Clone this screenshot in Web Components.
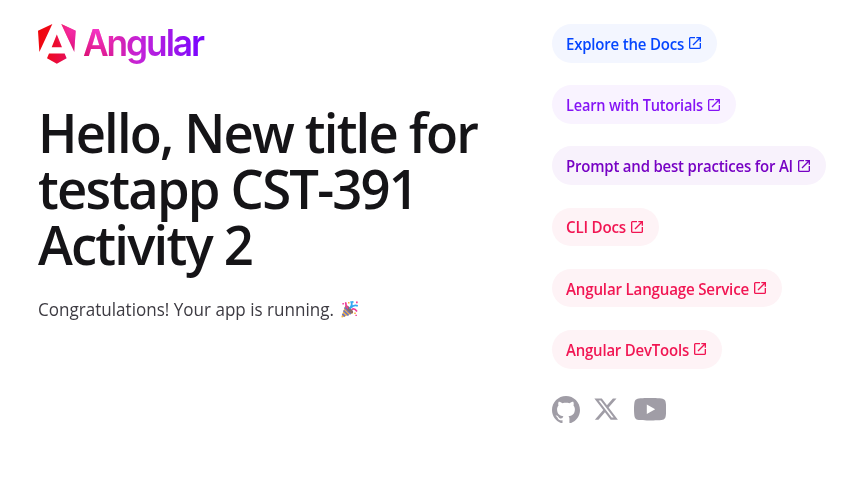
<!DOCTYPE html>
<html lang="en">
<head>
<meta charset="utf-8">
<title>Angular app</title>
<style>
body{margin:0;background:#fff;overflow:hidden;font-family:"Open Sans","Noto Sans",sans-serif;color:#151417}
</style>
</head>
<body>
<app-root></app-root>
<script>
/* Sets a single line of text to an exact advance width. */
class FitText extends HTMLElement{
  connectedCallback(){
    const r=this.attachShadow({mode:'open'});
    const w=parseFloat(this.getAttribute('width'));
    r.innerHTML=`<style>:host{display:block;width:${w}px;white-space:nowrap}span{display:inline-block;transform-origin:0 50%}</style><span><slot></slot></span>`;
    const s=r.querySelector('span');
    s.style.transform=`scaleX(${w/s.getBoundingClientRect().width})`;
  }
}
class AngularLogo extends HTMLElement{
  constructor(){super();this.attachShadow({mode:'open'}).innerHTML=`
<style>:host{display:flex;height:41px}svg{display:block;flex:none}
.word{margin-left:7.3px;height:42px;width:122px;font:600 37px/38px Inter,sans-serif;letter-spacing:-2.2px;transform:scaleX(.955);transform-origin:0 50%;padding-right:6px;color:transparent;background:radial-gradient(circle at 15px 3px,#ff41e0cc,#ff41f800 32px),linear-gradient(90deg,#dc1070,#dc1c96 20%,#c524d8 45%,#9c16ec 75%,#7b04ff 95%);-webkit-background-clip:text;background-clip:text}</style>
<svg width="38" height="41" viewBox="0 0 38 41">
<defs>
<linearGradient id="m" x1="0" y1="60" x2="222" y2="110" gradientUnits="userSpaceOnUse"><stop stop-color="#f0060b"/><stop offset=".35" stop-color="#ee0a1c"/><stop offset=".75" stop-color="#e90d4a"/><stop offset="1" stop-color="#dc1180"/></linearGradient>
<radialGradient id="p" cx="195" cy="32" r="115" gradientUnits="userSpaceOnUse"><stop stop-color="#f832b8" stop-opacity=".8"/><stop offset="1" stop-color="#ff41f8" stop-opacity="0"/></radialGradient>
<path id="s" d="M222.077 39.192l-8.019 125.923L137.387 0l84.69 39.192zm-53.105 162.825l-57.933 33.056-57.934-33.056 11.783-28.556h92.301l11.783 28.556zM111.039 62.675l30.357 73.803H80.681l30.358-73.803zM7.937 165.115L0 39.192 84.69 0 7.937 165.115z"/>
</defs>
<g transform="scale(.1695)"><use href="#s" fill="url(#m)"/><use href="#s" fill="url(#p)"/></g>
</svg><div class="word">Angular</div>`}
}
class PartyPopper extends HTMLElement{
  constructor(){super();this.attachShadow({mode:'open'}).innerHTML=`
<style>:host{display:block;width:18px;height:18px}svg{display:block}</style>
<svg width="18" height="18" viewBox="0 0 18 18" fill="none">
<path d="M4.4 5.2C7 6 11 10 12 13.2L1.2 17.4Q.2 17.5.6 16.2Z" fill="#f5b544"/>
<path d="M3.5 7.5l6.5 6.5M2.5 10.5l5 5M1.4 13.8l2.5 2.5" stroke="#6573c9" stroke-width="1.7"/>
<ellipse cx="8.2" cy="9.2" rx="5.2" ry="1.8" transform="rotate(46 8.2 9.2)" fill="#8a6b68"/>
<path d="M6.8 8.5Q4.3 4.5 4.8 2.2M10.8 9.4Q13.5 7.8 16 11.4" stroke="#ee3d9a" stroke-width="1.7"/>
<path d="M8.5 8.7Q11.8 5.2 10.3 2.2L12.5 1.8M10 7.7Q12.5 4.5 16.8 5.8" stroke="#35a7f2" stroke-width="1.8"/>
<path d="M7 2h1.5v1.5H7zM13.2 12.4h1.6V14h-1.6z" fill="#f9b43c"/>
<path d="M15 1.6h1.7v1.7H15zM1.4 3h1.5v1.5H1.4zM14.4 14.7h1.5v1.3h-1.5z" fill="#ee3d9a"/>
</svg>`}
}
class LinkPill extends HTMLElement{
  connectedCallback(){
    const c=this.getAttribute('color'),w=this.getAttribute('text-width');
    this.attachShadow({mode:'open'}).innerHTML=`
<style>:host{display:block}a{box-sizing:border-box;display:flex;align-items:center;width:max-content;height:38.6px;padding:0 14px 0 13.5px;border-radius:20px;color:${c};background:color-mix(in srgb,${c} 5%,white);font-weight:560;font-size:15.3px;line-height:21px;letter-spacing:-.2px;text-decoration:none}fit-text{padding-top:2px}svg{display:block;width:16px;height:16px;margin:.4px 0 0 3.5px}</style>
<a href="#"><fit-text width="${w}">${this.getAttribute('label')}</fit-text><svg viewBox="0 -960 960 960" fill="currentColor"><path d="M200-120q-33 0-56.5-23.5T120-200v-560q0-33 23.5-56.5T200-840h280v80H200v560h560v-280h80v280q0 33-23.5 56.5T760-120H200Zm188-212-56-56 372-372H560v-80h280v280h-80v-144L388-332Z"/></svg></a>`;
  }
}
class SocialLinks extends HTMLElement{
  constructor(){super();this.attachShadow({mode:'open'}).innerHTML=`
<style>:host{display:flex;align-items:center;fill:#a09da6}svg{display:block}</style>
<svg width="28" height="27.3" viewBox="0 0 24.61 24"><path d="M12.3047 0C5.50634 0 0 5.50942 0 12.3047C0 17.7423 3.52529 22.3535 8.41332 23.9787C9.02856 24.0946 9.25414 23.7142 9.25414 23.3871C9.25414 23.0949 9.24389 22.3207 9.23876 21.2953C5.81601 22.0377 5.09414 19.6444 5.09414 19.6444C4.53427 18.2243 3.72524 17.8449 3.72524 17.8449C2.61064 17.082 3.81137 17.0973 3.81137 17.0973C5.04697 17.1835 5.69604 18.3647 5.69604 18.3647C6.79321 20.2463 8.57636 19.7029 9.27978 19.3881C9.39052 18.5924 9.70736 18.0499 10.0591 17.7423C7.32641 17.4347 4.45429 16.3765 4.45429 11.6618C4.45429 10.3185 4.9311 9.22133 5.72065 8.36C5.58222 8.04931 5.16694 6.79833 5.82831 5.10337C5.82831 5.10337 6.85883 4.77319 9.2121 6.36459C10.1965 6.09082 11.2424 5.95546 12.2883 5.94931C13.3342 5.95546 14.3801 6.09082 15.3644 6.36459C17.7023 4.77319 18.7328 5.10337 18.7328 5.10337C19.3942 6.79833 18.9789 8.04931 18.8559 8.36C19.6403 9.22133 20.1171 10.3185 20.1171 11.6618C20.1171 16.3888 17.2409 17.4296 14.5031 17.7321C14.9338 18.1012 15.3337 18.8559 15.3337 20.0084C15.3337 21.6552 15.3183 22.978 15.3183 23.3779C15.3183 23.7009 15.5336 24.0854 16.1642 23.9623C21.0871 22.3484 24.6094 17.7341 24.6094 12.3047C24.6094 5.50942 19.0999 0 12.3047 0Z"/></svg>
<svg width="26.2" height="26.2" viewBox="0 0 24 24" style="margin-left:13.4px"><path d="M18.244 2.25h3.308l-7.227 8.26 8.502 11.24H16.17l-5.214-6.817L4.99 21.75H1.68l7.73-8.835L1.254 2.25H8.08l4.713 6.231zm-1.161 17.52h1.833L7.084 4.126H5.117z"/></svg>
<svg width="32.2" height="22.4" viewBox=".6 0 28.4 20" preserveAspectRatio="none" style="margin-left:14.1px"><path d="M27.4896 1.52422C27.9301 1.96749 28.2463 2.51866 28.4068 3.12258C29.0004 5.35161 29.0004 10 29.0004 10C29.0004 10 29.0004 14.6484 28.4068 16.8774C28.2463 17.4813 27.9301 18.0325 27.4896 18.4758C27.0492 18.9191 26.5 19.2389 25.8972 19.4032C23.6778 20 14.8068 20 14.8068 20C14.8068 20 5.93586 20 3.71651 19.4032C3.11363 19.2389 2.56449 18.9191 2.12405 18.4758C1.68361 18.0325 1.36732 17.4813 1.20683 16.8774C0.613281 14.6484 0.613281 10 0.613281 10C0.613281 10 0.613281 5.35161 1.20683 3.12258C1.36732 2.51866 1.68361 1.96749 2.12405 1.52422C2.56449 1.08095 3.11363 0.76113 3.71651 0.596774C5.93586 0 14.8068 0 14.8068 0C14.8068 0 23.6778 0 25.8972 0.596774C26.5 0.76113 27.0492 1.08095 27.4896 1.52422ZM19.3229 10L11.9036 5.77905V14.221L19.3229 10Z"/></svg>`}
}
class AppRoot extends HTMLElement{
  connectedCallback(){this.attachShadow({mode:'open'}).innerHTML=`
<style>
:host{display:block}
main{display:grid;grid-template-columns:514px 1fr;padding:24px 0 0 38px}
h1{margin:39px 0 0;padding-left:.4px;font-size:55px;line-height:56px;font-weight:580;letter-spacing:-1.9px;word-spacing:0}
.msg{display:flex;align-items:center;margin-top:24px;font-size:17.6px;line-height:26px;font-weight:380;color:#3d3b42}
party-popper{margin-left:7px}
.links{display:flex;flex-direction:column;gap:22.6px}
social-links{margin-top:4.6px}
</style>
<main>
<section><angular-logo></angular-logo>
<h1><fit-text width="439">Hello, New title for</fit-text><fit-text width="379">testapp CST-391</fit-text><fit-text width="214">Activity 2</fit-text></h1>
<div class="msg"><fit-text width="296">Congratulations! Your app is running.</fit-text><party-popper></party-popper></div></section>
<section class="links">
<link-pill color="#0546ff" label="Explore the Docs" text-width="118"></link-pill>
<link-pill color="#8514f5" label="Learn with Tutorials" text-width="137"></link-pill>
<link-pill color="#7702c4" label="Prompt and best practices for AI" text-width="227"></link-pill>
<link-pill color="#f11653" label="CLI Docs" text-width="60"></link-pill>
<link-pill color="#f11653" label="Angular Language Service" text-width="183"></link-pill>
<link-pill color="#f11653" label="Angular DevTools" text-width="123"></link-pill>
<social-links></social-links>
</section>
</main>`}
}
customElements.define('fit-text',FitText);
customElements.define('angular-logo',AngularLogo);
customElements.define('party-popper',PartyPopper);
customElements.define('link-pill',LinkPill);
customElements.define('social-links',SocialLinks);
customElements.define('app-root',AppRoot);
</script>
</body>
</html>
